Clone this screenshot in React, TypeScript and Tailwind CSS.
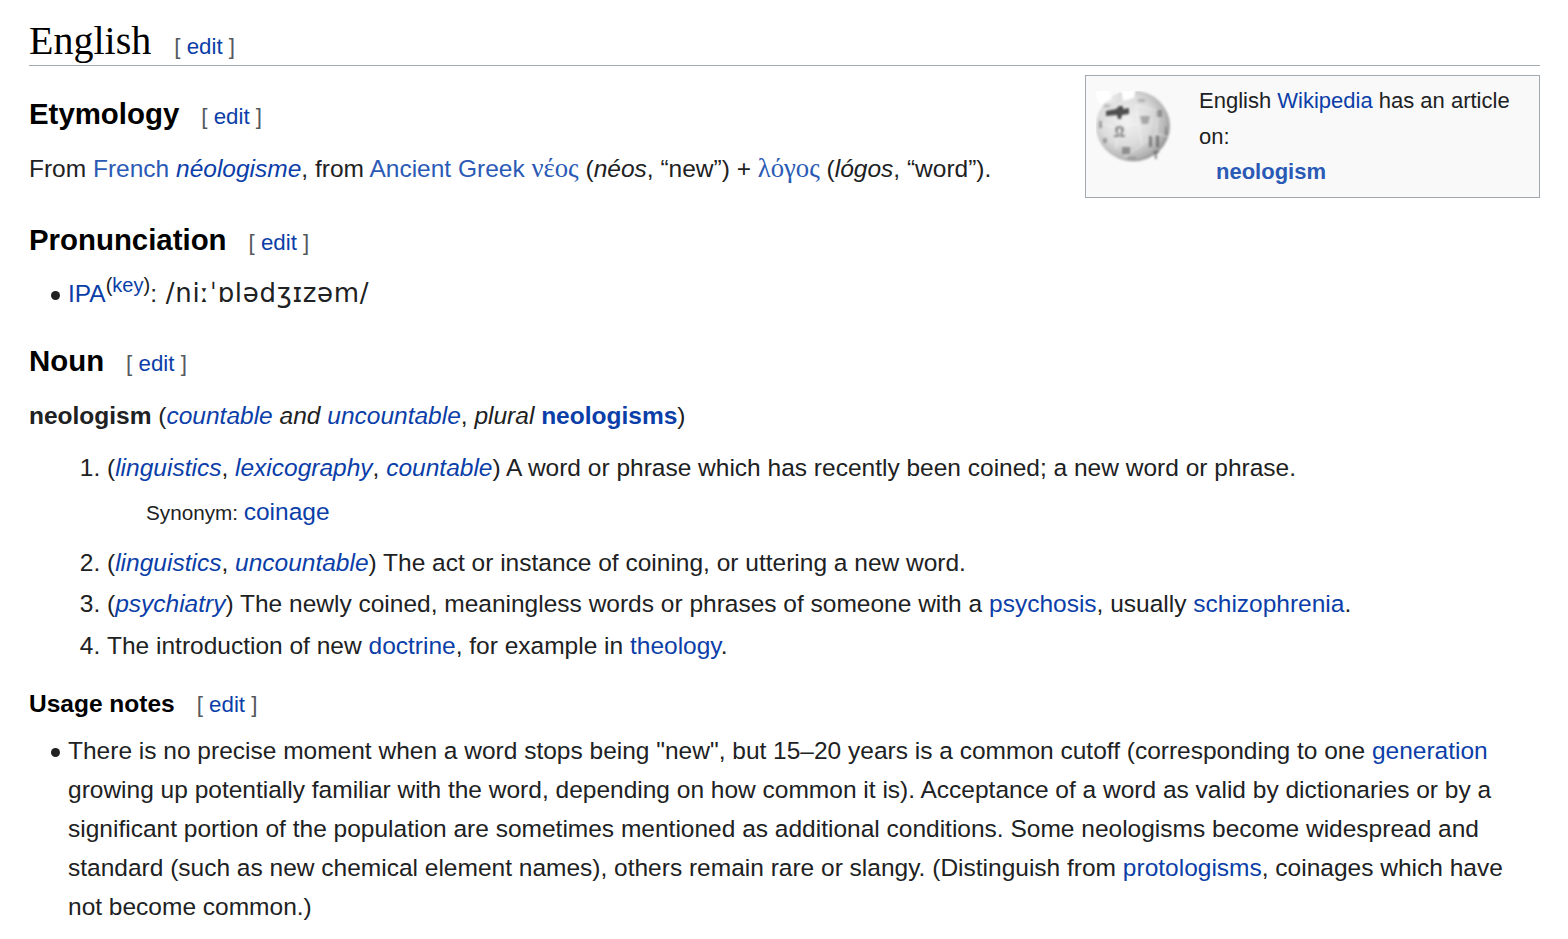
const Link = ({ children, className = "" }: { children: React.ReactNode; className?: string }) => (
  <a className={`text-[#0b3ea8] ${className}`}>{children}</a>
);

const Soft = ({ children, className = "" }: { children: React.ReactNode; className?: string }) => (
  <a className={`text-[#2a5ab5] ${className}`}>{children}</a>
);

const Edit = () => (
  <span className="text-[22.3px] font-normal text-[#54595d]">
    [ <Link>edit</Link> ]
  </span>
);

const Dot = () => <span className="mr-[8px] -ml-[17px] inline-block size-[9px] rounded-full bg-[#202122] align-[2px]" />;

const Globe = () => (
  <svg width="76" height="72" viewBox="0 0 76 72" className="block">
    <defs>
      <radialGradient id="g" cx="0.4" cy="0.42" r="0.64">
        <stop offset="0" stopColor="#f2f2f2" />
        <stop offset="0.55" stopColor="#dcdcdc" />
        <stop offset="0.85" stopColor="#b4b4b4" />
        <stop offset="1" stopColor="#8c8c8c" />
      </radialGradient>
      <filter id="b" x="-10%" y="-10%" width="120%" height="120%">
        <feGaussianBlur stdDeviation="0.9" />
      </filter>
      <filter id="c">
        <feGaussianBlur stdDeviation="0.8" />
      </filter>
    </defs>
    <g filter="url(#b)">
      <ellipse cx="37" cy="35" rx="37" ry="35.5" fill="url(#g)" />
      <path d="M12 -3 L16 8 L4 14 L-2 -3 Z" fill="#fff" />
      <path d="M25 -3 L27 10 L38 7 L40 -3 Z" fill="#fff" />
      <path d="M8 12 L24 3 L18 12 Z" fill="#e8e8e8" />
    </g>
    <g filter="url(#c)" fill="none" stroke="#fff" strokeWidth="1" opacity="0.55">
      <path d="M4 32 L22 38 L20 58 M22 38 L42 32 L46 54 L28 66 M42 32 L40 14 L62 20 L60 42 L46 54 M60 42 L72 46" />
    </g>
    <g filter="url(#c)" fill="#505050">
      <path d="M10 20 L20 18 L23 15 L27 15 L27 18 L33 17 L33 23 L26 24 L25 28 L22 28 L21 24 L10 25 Z" />
      <path d="M19 38 C19 34 28 34 28 38 C28 41 26 42 26 44 L29 44 L29 46 L24 46 L24 43 C26 41 25 37 23.5 37 C22 37 21 41 23 43 L23 46 L18 46 L18 44 L21 44 C21 42 19 41 19 38 Z" opacity="0.6" />
      <path d="M44 25 h10 l-2 8 h-6 Z" opacity="0.4" />
      <path d="M61 19 h5 v7 h-5 Z" opacity="0.45" />
      <path d="M53 45 h3 v11 h-3 Z M60 45 h3 v11 h-3 Z" opacity="0.6" />
      <path d="M26 56 h8 v7 h-8 Z" opacity="0.5" />
      <path d="M58 60 h5 v2 h-2 v6 h-2 Z" opacity="0.6" />
      <path d="M3 30 h3 v7 h-3 Z" opacity="0.45" />
      <path d="M7 47 h4 v5 h-4 Z" opacity="0.4" />
      <path d="M69 36 h2 v8 h-2 Z" opacity="0.4" />
      <path d="M32 66 h8 v2 h-8 Z" opacity="0.3" />
      <path d="M42 8 h7 v3 h-7 Z" opacity="0.3" />
      <path d="M8 14 h6 v2 h-6 Z" opacity="0.3" />
    </g>
  </svg>
);

export default function App() {
  return (
    <div className="h-[939px] overflow-hidden bg-white pr-[28px] pl-[29px] font-['Liberation_Sans',Arial,sans-serif] text-[24.5px] leading-[39px] text-[#202122]">
      <div className="flex h-[66px] items-end gap-[23px] border-b border-[#a2a9b1] pb-[2px] font-['Liberation_Serif',serif] text-[40px] leading-[44px] text-black">
        <span>English</span>
        <span className="font-['Liberation_Sans',sans-serif] text-[22.3px] leading-[32px] text-[#54595d]">
          [ <Link>edit</Link> ]
        </span>
      </div>

      <div className="float-right mt-[9px] ml-[20px] flex h-[123px] w-[455px] border border-[#a2a9b1] bg-[#f9f9f9] pt-[7px] pl-[10px] text-[22px] leading-[35.5px]">
        <div className="w-[103px] shrink-0 pt-[8px]">
          <Globe />
        </div>
        <div>
          <p>
            English <Link>Wikipedia</Link> has an article on:
          </p>
          <p className="pl-[17px] font-bold">
            <Soft>neologism</Soft>
          </p>
        </div>
      </div>

      <h2 className="mt-[28px] flex items-baseline gap-[22px] text-[29.4px] leading-[40px] font-bold text-black">
        <span>Etymology</span>
        <Edit />
      </h2>
      <p className="mt-[12px]">
        From <Soft>French</Soft> <Link className="italic">néologisme</Link>, from <Soft>Ancient Greek</Soft>{" "}
        <Soft className="font-['Liberation_Serif',serif] text-[26.7px]">νέος</Soft> (<i>néos</i>, “new”) +{" "}
        <Soft className="font-['Liberation_Serif',serif] text-[26.7px]">λόγος</Soft> (<i>lógos</i>, “word”).
      </p>

      <h2 className="mt-[32px] flex items-baseline gap-[22px] text-[29.4px] leading-[40px] font-bold text-black">
        <span>Pronunciation</span>
        <Edit />
      </h2>
      <ul className="mt-[11px] pl-[39px]">
        <li>
          <Dot />
          <Link>IPA</Link>
          <sup className="text-[20px]">
            (<Link>key</Link>)
          </sup>
          :{" "}
          <span className="ml-[2px] font-['DejaVu_Sans',sans-serif] text-[26px] tracking-[0.7px]">/niːˈɒlədʒɪzəm/</span>
        </li>
      </ul>

      <h2 className="mt-[28px] flex items-baseline gap-[22px] text-[29.4px] leading-[40px] font-bold text-black">
        <span>Noun</span>
        <Edit />
      </h2>
      <p className="mt-[12px]">
        <b>neologism</b> (<Link className="italic">countable</Link> <i>and</i>{" "}
        <Link className="italic">uncountable</Link>, <i>plural</i> <Link className="font-bold">neologisms</Link>)
      </p>

      <ol className="mt-[13px] list-decimal pl-[78px]">
        <li>
          (<Link className="italic">linguistics</Link>, <Link className="italic">lexicography</Link>,{" "}
          <Link className="italic">countable</Link>) A word or phrase which has recently been coined; a new word or
          phrase.
          <div className="mt-[5px] mb-[11px] pl-[39px] text-[20.7px]">
            Synonym: <Link className="text-[24.5px]">coinage</Link>
          </div>
        </li>
        <li className="mb-[2px]">
          (<Link className="italic">linguistics</Link>, <Link className="italic">uncountable</Link>) The act or instance
          of coining, or uttering a new word.
        </li>
        <li className="mb-[3px]">
          (<Link className="italic">psychiatry</Link>) The newly coined, meaningless words or phrases of someone with a{" "}
          <Link>psychosis</Link>, usually <Link>schizophrenia</Link>.
        </li>
        <li>
          The introduction of new <Link>doctrine</Link>, for example in <Link>theology</Link>.
        </li>
      </ol>

      <h3 className="mt-[19px] flex items-baseline gap-[22px] leading-[40px] font-bold text-black">
        <span>Usage notes</span>
        <Edit />
      </h3>
      <ul className="mt-[6px] pl-[39px]">
        <li>
          <Dot />
          There is no precise moment when a word stops being "new", but 15–20 years is a common cutoff (corresponding to
          one <Link>generation</Link> growing up potentially familiar with the word, depending on how common it is).
          Acceptance of a word as valid by dictionaries or by a significant portion of the population are sometimes
          mentioned as additional conditions. Some neologisms become widespread and standard (such as new chemical
          element names), others remain rare or slangy. (Distinguish from <Link>protologisms</Link>, coinages which have
          not become common.)
        </li>
      </ul>
    </div>
  );
}
